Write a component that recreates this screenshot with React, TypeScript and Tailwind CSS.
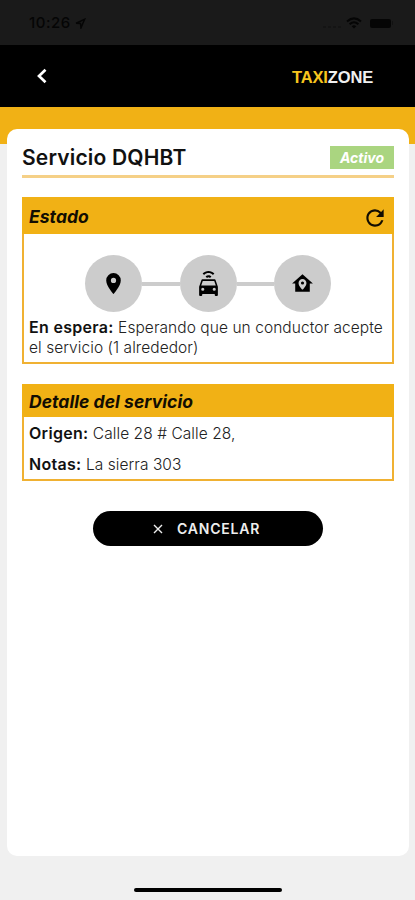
import type { ReactNode } from "react";
import { MdRefresh } from "react-icons/md";

const MARKER =
  "M12 11.5A2.5 2.5 0 0 1 9.5 9A2.5 2.5 0 0 1 12 6.5A2.5 2.5 0 0 1 14.5 9A2.5 2.5 0 0 1 12 11.5M12 2A7 7 0 0 0 5 9C5 14.25 12 22 12 22C12 22 19 14.25 19 9A7 7 0 0 0 12 2Z";
const CAR =
  "M5 14H19L17.5 9.5H6.5L5 14M17.5 19A1.5 1.5 0 0 0 19 17.5A1.5 1.5 0 0 0 17.5 16A1.5 1.5 0 0 0 16 17.5A1.5 1.5 0 0 0 17.5 19M6.5 19A1.5 1.5 0 0 0 8 17.5A1.5 1.5 0 0 0 6.5 16A1.5 1.5 0 0 0 5 17.5A1.5 1.5 0 0 0 6.5 19M18.92 9L21 15V23A1 1 0 0 1 20 24H19A1 1 0 0 1 18 23V22H6V23A1 1 0 0 1 5 24H4A1 1 0 0 1 3 23V15L5.08 9C5.28 8.42 5.85 8 6.5 8H17.5C18.15 8 18.72 8.42 18.92 9M12 0C14.12 0 16.15 .86 17.65 2.35L16.23 3.77C15.11 2.65 13.58 2 12 2C10.42 2 8.89 2.65 7.77 3.77L6.36 2.35C7.85 .86 9.88 0 12 0M12 4C13.06 4 14.07 4.44 14.82 5.18L13.4 6.6C13.03 6.23 12.53 6 12 6C11.5 6 10.97 6.23 10.6 6.6L9.18 5.18C9.93 4.44 10.94 4 12 4Z";
const HOME =
  "M12 3L2 12H5V20H19V12H22L12 3M12 7.7C14.1 7.7 15.8 9.4 15.8 11.5C15.8 14.5 12 18 12 18C12 18 8.2 14.5 8.2 11.5C8.2 9.4 9.9 7.7 12 7.7M12 10A1.5 1.5 0 0 0 10.5 11.5A1.5 1.5 0 0 0 12 13A1.5 1.5 0 0 0 13.5 11.5A1.5 1.5 0 0 0 12 10Z";

function Step({ d }: { d: string }) {
  return (
    <div className="flex size-[57px] items-center justify-center rounded-full bg-[#cccccc]">
      <svg viewBox="0 0 24 24" className="size-[25px]" fill="#000">
        <path fillRule="evenodd" d={d} />
      </svg>
    </div>
  );
}

function Label({ children }: { children: ReactNode }) {
  return <b className="text-[16px] font-semibold tracking-[0.3px] text-[#111]">{children}</b>;
}

function Panel({ title, action, className, children }: { title: string; action?: ReactNode; className: string; children: ReactNode }) {
  return (
    <section className={`flex flex-col border-2 border-[#f0b132] ${className}`}>
      <header className="-mx-0.5 -mt-0.5 flex h-[37px] shrink-0 items-center justify-between bg-[#f1b115] pt-[4px] pr-[6px] pl-[7px] [section:nth-of-type(2)>&]:h-[33px]">
        <h2 className="text-[17.5px] font-bold italic tracking-[0.05px] text-[#120d02]">{title}</h2>
        {action}
      </header>
      {children}
    </section>
  );
}

export default function App() {
  return (
    <div className="flex h-[900px] w-[415px] flex-col overflow-hidden bg-[#f0f0f0] font-['Inter',sans-serif] text-[#111]">
      <div className="flex h-[45px] shrink-0 items-center bg-[#1a1a1a] pl-[29px] pr-[20px] pt-px text-[#050505]">
        <span className="text-[15px] font-medium tracking-[0.5px]">10:26</span>
        <svg viewBox="0 0 12 12" className="ml-[4px] size-[11px]" fill="none" stroke="currentColor" strokeWidth="1.6">
          <path d="M1.2 5.7L10.5 1.4L6.5 10.8L6 6Z" />
        </svg>
        <div className="ml-auto flex items-center gap-[8px]">
          <div className="flex gap-[2px] pt-[8px]">
            <i className="h-[2px] w-[3px] bg-[#141414]" />
            <i className="h-[2px] w-[3px] bg-[#141414]" />
            <i className="h-[2px] w-[3px] bg-[#141414]" />
            <i className="h-[2px] w-[3px] bg-[#141414]" />
          </div>
          <svg viewBox="0 0 16 12" className="-ml-[3px] mr-[-3px] h-[12px] w-[16px]" fill="none" stroke="currentColor" strokeWidth="2">
            <path d="M1 4.5Q8 -1.8 15 4.5M3.6 7.3Q8 3.3 12.4 7.3" />
            <path d="M5.7 9.2Q8 7.2 10.3 9.2L8 11.6Z" fill="currentColor" stroke="none" />
          </svg>
          <div className="ml-[3px] mr-[2px] flex items-center gap-px">
            <i className="h-[9px] w-[21px] rounded-[2px] bg-[#050505]" />
            <i className="h-[4px] w-[1.5px] rounded-r bg-[#111]" />
          </div>
        </div>
      </div>
      <div className="flex h-[62px] shrink-0 items-center justify-between bg-black pl-[36px] pr-[42px]">
        <svg viewBox="0 0 12 16" className="h-[16px] w-[12px]" fill="none" stroke="#fff" strokeWidth="2.7">
          <path d="M9.5 1.7L3 8L9.5 14.3" />
        </svg>
        <span className="pt-[2px] font-['Liberation_Sans',sans-serif] text-[16.5px] font-bold tracking-[-0.15px] text-[#f0f0f0]">
          <span className="text-[#f7c51e]">TAXI</span>ZONE
        </span>
      </div>
      <div className="h-[37px] shrink-0 bg-[#f1b115]" />
      <main className="relative -mt-[15px] ml-[7px] flex h-[727px] w-[402px] shrink-0 flex-col rounded-[10px] bg-white px-[15px]">
        <div className="flex h-[49px] shrink-0 items-start justify-between border-b-3 border-[#f5d087] pt-[16px]">
          <h1 className="text-[21px] leading-[25px] font-semibold tracking-[0.18px] whitespace-nowrap">Servicio DQHBT</h1>
          <span className="mt-px flex h-[23px] w-[64px] items-center justify-center bg-[#aad580] text-[14px] font-bold italic text-white">Activo</span>
        </div>
        <Panel title="Estado" className="mt-[19px] h-[167px]" action={<MdRefresh className="size-[26px] text-[#120d02]" />}>
          <div className="mt-[21px] flex items-center justify-center">
            <Step d={MARKER} />
            <i className="h-[4px] w-[37.5px] bg-[#cccccc]" />
            <Step d={CAR} />
            <i className="h-[4px] w-[37.5px] bg-[#cccccc]" />
            <Step d={HOME} />
          </div>
          <p className="mt-[6px] pl-[5px] text-[15.5px] leading-[19.5px] font-light tracking-[0.06px] whitespace-nowrap text-[#222]">
            <Label>En espera:</Label> Esperando que un conductor acepte
            <br />
            el servicio (1 alrededor)
          </p>
        </Panel>
        <Panel title="Detalle del servicio" className="mt-[20px] h-[97px]">
          <p className="mt-[6px] pl-[5px] text-[15.5px] leading-[20px] font-light tracking-[0.06px] text-[#222]">
            <Label>Origen:</Label> Calle 28 # Calle 28,
          </p>
          <p className="mt-[10px] pl-[5px] text-[15.5px] leading-[20px] font-light tracking-[0.06px] text-[#222]">
            <Label>Notas:</Label> La sierra 303
          </p>
        </Panel>
        <button className="mt-[30px] ml-[71px] flex h-[35px] w-[230px] shrink-0 items-center rounded-full bg-black pl-[60px] text-white">
          <svg viewBox="0 0 10 10" className="size-[10px]" stroke="#eee" strokeWidth="1.4">
            <path d="M1 1L9 9M9 1L1 9" />
          </svg>
          <span className="ml-[14px] text-[14px] font-semibold tracking-[0.8px] text-[#eee]">CANCELAR</span>
        </button>
      </main>
      <div className="mt-[32px] ml-[134px] h-[4px] w-[148px] rounded-full bg-black" />
    </div>
  );
}
